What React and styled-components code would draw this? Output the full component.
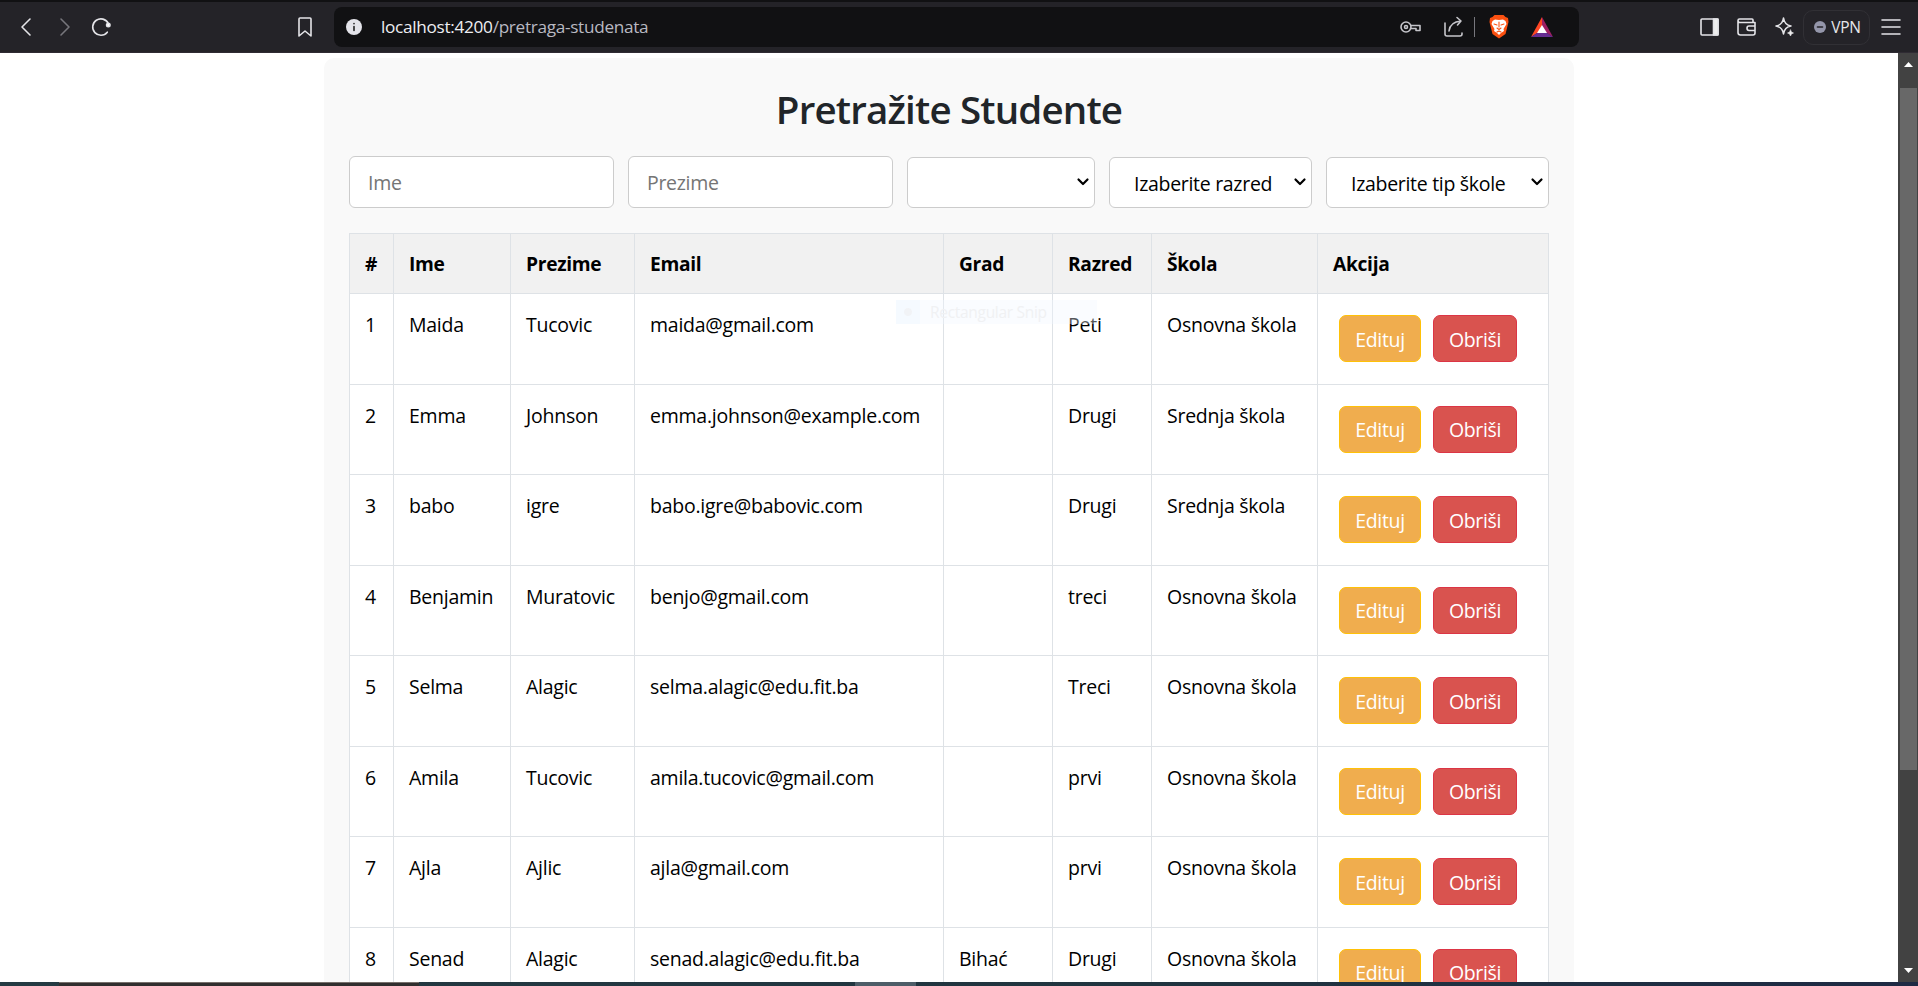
import React from "react";
import styled, { createGlobalStyle } from "styled-components";

const GlobalStyle = createGlobalStyle`
  * { box-sizing: border-box; }
  body { margin: 0; overflow: hidden; font-family: "Open Sans", "Noto Sans", sans-serif; }
`;

const Screen = styled.div`
  position: relative;
  width: 1918px;
  height: 986px;
  display: flex;
  flex-direction: column;
  overflow: hidden;
  background: #fff;
`;

const Toolbar = styled.header`
  flex: none;
  height: 53px;
  display: flex;
  align-items: center;
  padding: 0 17px 0 18px;
  background: #242328;
  border-top: 2px solid #111113;
  border-bottom: 1px solid #2f2b33;
`;

const Glyph = styled.svg`
  flex: none;
  display: block;
  width: ${(p) => p.$w || 20}px;
  height: ${(p) => p.$h || 22}px;
  margin-left: ${(p) => p.$gap || 0}px;
  fill: none;
  stroke: ${(p) => p.$color || "#e4e4e8"};
  stroke-width: 1.6;
  stroke-linecap: round;
  stroke-linejoin: round;
  overflow: visible;
`;

const AddressBar = styled.div`
  width: 1245px;
  height: 40px;
  margin-left: 22px;
  padding: 0 26px 0 12px;
  display: flex;
  align-items: center;
  border-radius: 8px;
  background: #111113;
`;

const Url = styled.div`
  flex: 1;
  margin-left: 19px;
  font-size: 17.2px;
  line-height: 24px;
  letter-spacing: -0.3px;
  color: #b9b9c2;
  span { color: #eeeef2; }
`;

const Divider = styled.i`
  width: 1px;
  height: 20px;
  margin-left: 11px;
  background: #77777d;
`;

const VpnButton = styled.div`
  width: 67px;
  height: 35px;
  margin-left: 9px;
  padding-left: 2px;
  display: flex;
  align-items: center;
  justify-content: center;
  gap: 5px;
  border: 1px solid #313035;
  border-radius: 10px;
  font-size: 15.5px;
  letter-spacing: -0.3px;
  color: #e6e6ea;
`;

const Viewport = styled.div`
  flex: 1;
  min-height: 0;
  display: flex;
`;

const Page = styled.main`
  flex: 1;
  overflow: hidden;
  padding-top: 5px;
`;

const Panel = styled.section`
  width: 1250px;
  margin: 0 auto;
  padding: 25px;
  border-radius: 10px;
  background: #f9f9f9;
`;

const Title = styled.h1`
  margin: 0;
  height: 73px;
  padding-top: 1px;
  font-size: 38.5px;
  line-height: 50px;
  font-weight: 600;
  text-align: center;
  color: #212529;
  letter-spacing: -0.83px;
`;

const Filters = styled.div`
  display: flex;
  align-items: flex-end;
  justify-content: space-between;
  margin-bottom: 25px;
`;

const Input = styled.input`
  width: 265px;
  height: 52px;
  padding: 1px 18px 0;
  border: 1px solid #ccc;
  border-radius: 6px;
  background: #fff;
  font: 19.5px "Open Sans", sans-serif;
  letter-spacing: -0.3px;
  &::placeholder { color: #757575; }
`;

const Select = styled.div`
  width: ${(p) => p.$w}px;
  height: 51px;
  padding: 2px 5px 0 24px;
  display: flex;
  align-items: center;
  justify-content: space-between;
  border: 1px solid #ccc;
  border-radius: 6px;
  background: #fff;
  font-size: 19.5px;
  letter-spacing: -0.3px;
  white-space: nowrap;
`;

const Caret = styled(Glyph)`
  margin: -3px 0 0 auto;
  stroke: #000;
  stroke-width: 2.2;
`;

const Table = styled.table`
  width: 1200px;
  table-layout: fixed;
  border-collapse: collapse;
  background: #fff;
  color: #000;
  font-size: 19.5px;
  line-height: 30px;
`;

const Head = styled.th`
  height: 60px;
  padding: 1px 15px 0;
  border: 1px solid #dee2e6;
  background: #f1f1f1;
  text-align: left;
  font-size: 19.2px;
  font-weight: 700;
  letter-spacing: -0.3px;
`;

const Cell = styled.td`
  height: 90.5px;
  padding: 16px 15px 0;
  border: 1px solid #dee2e6;
  vertical-align: top;
  white-space: nowrap;
  letter-spacing: -0.25px;
`;

const Actions = styled.div`
  display: flex;
  gap: 12px;
  padding: 5px 0 0 6px;
`;

const Button = styled.button`
  width: ${(p) => (p.$danger ? 84 : 82)}px;
  height: 47px;
  padding: 1px 0 0;
  border: 1px solid ${(p) => (p.$danger ? "#dc3545" : "#ffc107")};
  border-radius: 7px;
  background: ${(p) => (p.$danger ? "#d9534f" : "#f0ad4e")};
  color: #fff;
  font: 19.5px "Open Sans", sans-serif;
  letter-spacing: -0.35px;
`;

const FadingMenuItem = styled.div`
  position: absolute;
  left: 896px;
  top: 300px;
  width: 201px;
  height: 24px;
  display: flex;
  align-items: center;
  background: rgba(240, 247, 255, 0.35);
  font-size: 15.5px;
  letter-spacing: -0.3px;
  color: #f0f1f3;
`;

const MenuMark = styled.i`
  width: 24px;
  height: 24px;
  margin-right: 10px;
  background: radial-gradient(circle, #f1f3f6 3.5px, #f5faff 4.5px);
`;

const Scrollbar = styled.aside`
  width: 20px;
  display: flex;
  flex-direction: column;
  align-items: center;
  padding: 9px 0;
  background: #424242;
`;

const Thumb = styled.div`
  width: 17px;
  height: 682px;
  margin: 21px 0 auto;
  background: #686868;
`;

const Arrow = styled.svg`
  flex: none;
  width: 9px;
  height: 5px;
  fill: #fff;
`;

const Taskbar = styled.footer`
  flex: none;
  height: 4px;
  background: linear-gradient(90deg, #243a42, #20343f 60%, #1e2a44);
  display: flex;
`;

const TaskItem = styled.div`
  width: ${(p) => p.$w}px;
  margin-left: ${(p) => p.$x}px;
  background: ${(p) => p.$bg};
  border-top: 1px solid ${(p) => p.$line};
`;

const columns = [
  ["#", 44], ["Ime", 117], ["Prezime", 124], ["Email", 309],
  ["Grad", 109], ["Razred", 99], ["Škola", 166], ["Akcija", 231],
];

const students = [
  ["Maida", "Tucovic", "maida@gmail.com", "", "Peti", "Osnovna škola"],
  ["Emma", "Johnson", "emma.johnson@example.com", "", "Drugi", "Srednja škola"],
  ["babo", "igre", "babo.igre@babovic.com", "", "Drugi", "Srednja škola"],
  ["Benjamin", "Muratovic", "benjo@gmail.com", "", "treci", "Osnovna škola"],
  ["Selma", "Alagic", "selma.alagic@edu.fit.ba", "", "Treci", "Osnovna škola"],
  ["Amila", "Tucovic", "amila.tucovic@gmail.com", "", "prvi", "Osnovna škola"],
  ["Ajla", "Ajlic", "ajla@gmail.com", "", "prvi", "Osnovna škola"],
  ["Senad", "Alagic", "senad.alagic@edu.fit.ba", "Bihać", "Drugi", "Osnovna škola"],
];

function Dropdown({ width, children }) {
  return (
    <Select $w={width}>
      {children}
      <Caret $w={12} $h={8} viewBox="0 0 12 8"><path d="M1.500 1.500 6 6l4.500-4.500" /></Caret>
    </Select>
  );
}

function BrowserBar() {
  return (
    <Toolbar>
      <Glyph $w={16} viewBox="0 0 16 22"><path d="M12 3 4 11l8 8" /></Glyph>
      <Glyph $w={16} $gap={22} $color="#77767c" viewBox="0 0 16 22"><path d="m5 3 8 8-8 8" /></Glyph>
      <Glyph $w={20} $gap={19} viewBox="0 0 20 22"><path d="M16.300 16.200A8.200 8.200 0 1 1 17.300 7.500" /><circle cx="17.300" cy="9" r="1.700" fill="#fff" /></Glyph>
      <Glyph $w={14} $gap={187} viewBox="0 0 14 22"><path d="M1 3q0-1 1-1h10q1 0 1 1v17l-6-5-6 5z" /></Glyph>
      <AddressBar>
        <Glyph $w={16} $h={16} viewBox="0 0 16 16" $color="none"><circle cx="8" cy="8" r="8" fill="#e4e4ea" /><path d="M8 7.500v4M8 4.500v.2" stroke="#222" /></Glyph>
        <Url><span>localhost:4200</span>/pretraga-studenata</Url>
        <Glyph $w={21} viewBox="0 0 21 22" $color="#c5c5ca"><circle cx="6" cy="11" r="5" /><circle cx="6" cy="11" r="1.500" /><path d="M11 9.500h9v5h-4v-2h-5.500" /></Glyph>
        <Glyph $w={19} $gap={23} viewBox="0 0 19 22" $color="#c5c5ca"><path d="M1 7v11q0 2 2 2h13q2 0 2-2v-1M5 15q1-9 12-10M13 1.500l4 3.500-3.500 4" /></Glyph>
        <Divider />
        <Glyph $w={20} $h={24} $gap={14} viewBox="0 0 20 24" $color="none">
          <path d="M5.500 0h9l2 2 2.500 1 .5 4-.5 2-2.500 10-6.500 4.500L3.500 19 1 9 .5 7 1 3l2.500-1z" fill="#fb5010" />
          <path d="m3.500 6 2.500-1.500L10 5l4-.5L16.500 6l1 3-3 5 .5 2-3 2-2 2-2-2-3-2 .5-2-3-5z" fill="#fff" />
          <path d="m5 9 3 1M15 9l-3 1M10 7v5M8 13l2 1.500 2-1.500M8 17l2-1 2 1" stroke="#fb5010" strokeWidth="1.100" />
        </Glyph>
        <Glyph $w={22} $h={20} $gap={22} viewBox="0 0 22 20" $color="none"><path d="M11 0 0 20l11-7z" fill="#ff4724" /><path d="m11 0 11 20-11-7z" fill="#9e1f63" /><path d="M0 20h22l-6-4H6z" fill="#662d91" /><path d="m11 8 5 8H6z" fill="#fff" /></Glyph>
      </AddressBar>
      <Glyph $w={19} $gap={121} viewBox="0 0 19 22"><rect x="1" y="3" width="17" height="16" rx="1" /><path d="M13.500 3H18v16h-4.500z" fill="#eee" /></Glyph>
      <Glyph $w={19} $gap={18} viewBox="0 0 19 22"><path d="M1 4.500v12Q1 19 3.500 19H16q2 0 2-2V6.500H3q-2 0-2-2Q1 3 2.500 3H15q1 0 1 1v2.500M18 10h-6q-2 0-2 2.200t2 2.300h6" /></Glyph>
      <Glyph $w={19} $gap={19} viewBox="0 0 19 22"><path d="M8.500 2q1 7 7.500 8-6.500 1-7.500 8-1-7-7.500-8 6.500-1 7.500-8z" /><path d="M15.500 14q.4 2.600 3 3-2.600.4-3 3-.4-2.600-3-3 2.600-.4 3-3z" fill="#eee" strokeWidth="0.600" /></Glyph>
      <VpnButton>
        <Glyph $w={12} $h={12} viewBox="0 0 12 12" $color="#242328"><circle cx="6" cy="6" r="6" fill="#9496aa" stroke="none" /><path d="M3.500 6h5" /></Glyph>
        VPN
      </VpnButton>
      <Glyph $w={18} $gap={12} viewBox="0 0 18 22"><path d="M0 4h18M0 11h18M0 18h18" /></Glyph>
    </Toolbar>
  );
}

export default function App() {
  return (
    <Screen>
      <GlobalStyle />
      <BrowserBar />
      <Viewport>
        <Page>
          <Panel>
            <Title>Pretražite Studente</Title>
            <Filters>
              <Input placeholder="Ime" />
              <Input placeholder="Prezime" />
              <Dropdown width={188} />
              <Dropdown width={203}>Izaberite razred</Dropdown>
              <Dropdown width={223}>Izaberite tip škole</Dropdown>
            </Filters>
            <Table>
              <colgroup>{columns.map(([name, w]) => <col key={name} width={w} />)}</colgroup>
              <thead><tr>{columns.map(([name]) => <Head key={name}>{name}</Head>)}</tr></thead>
              <tbody>
                {students.map((s, i) => (
                  <tr key={i}>
                    <Cell>{i + 1}</Cell>
                    {s.map((v, j) => <Cell key={j}>{v}</Cell>)}
                    <Cell><Actions><Button>Edituj</Button><Button $danger>Obriši</Button></Actions></Cell>
                  </tr>
                ))}
              </tbody>
            </Table>
          </Panel>
        </Page>
        <Scrollbar>
          <Arrow viewBox="0 0 9 5"><path d="M0 5 4.500 0 9 5z" /></Arrow>
          <Thumb />
          <Arrow viewBox="0 0 9 5"><path d="M0 0h9L4.500 5z" /></Arrow>
        </Scrollbar>
      </Viewport>
      <Taskbar>
        <TaskItem $x={59} $w={360} $bg="#302e2e" $line="#77706c" />
        <TaskItem $x={436} $w={61} $bg="#4d5d68" $line="#4d5d68" />
      </Taskbar>
      <FadingMenuItem><MenuMark />Rectangular Snip</FadingMenuItem>
    </Screen>
  );
}
